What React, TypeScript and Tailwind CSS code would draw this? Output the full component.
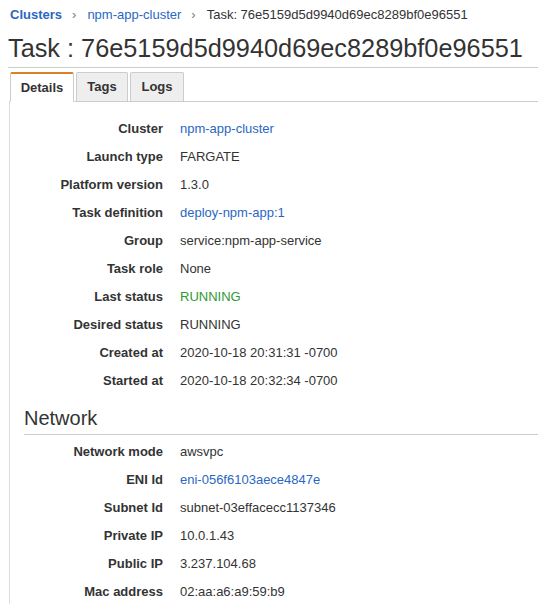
const font = { fontFamily: '"Liberation Sans", Arial, sans-serif' };

type Row = { label: string; value: string; kind?: "link" | "ok" };

const details: Row[] = [
  { label: "Cluster", value: "npm-app-cluster", kind: "link" },
  { label: "Launch type", value: "FARGATE" },
  { label: "Platform version", value: "1.3.0" },
  { label: "Task definition", value: "deploy-npm-app:1", kind: "link" },
  { label: "Group", value: "service:npm-app-service" },
  { label: "Task role", value: "None" },
  { label: "Last status", value: "RUNNING", kind: "ok" },
  { label: "Desired status", value: "RUNNING" },
  { label: "Created at", value: "2020-10-18 20:31:31 -0700" },
  { label: "Started at", value: "2020-10-18 20:32:34 -0700" },
];

const network: Row[] = [
  { label: "Network mode", value: "awsvpc" },
  { label: "ENI Id", value: "eni-056f6103aece4847e", kind: "link" },
  { label: "Subnet Id", value: "subnet-03effacecc1137346" },
  { label: "Private IP", value: "10.0.1.43" },
  { label: "Public IP", value: "3.237.104.68" },
  { label: "Mac address", value: "02:aa:a6:a9:59:b9" },
];

function KeyValue({ row }: { row: Row }) {
  const color =
    row.kind === "link" ? "text-[#2a67c4]" : row.kind === "ok" ? "text-[#2e9a31]" : "text-[#333]";
  return (
    <div className="flex h-[28px] items-center text-[13px]">
      <div className="w-[139px] text-right font-bold text-[#333]">{row.label}</div>
      <div className={`ml-[17px] whitespace-nowrap ${color}`}>{row.value}</div>
    </div>
  );
}

export default function App() {
  return (
    <div className="h-[604px] w-[538px] overflow-hidden bg-white" style={font}>
      {/* breadcrumb */}
      <div className="flex h-[30px] items-center pl-[10px] text-[13px]">
        <span className="font-bold text-[#2a67c4]">Clusters</span>
        <span className="ml-[10px] mr-[11px] text-[#777]">›</span>
        <span className="text-[#2a67c4]">npm-app-cluster</span>
        <span className="ml-[10px] mr-[11px] text-[#777]">›</span>
        <span className="text-[#333]">Task: 76e5159d5d9940d69ec8289bf0e96551</span>
      </div>

      <div className="ml-[8px] border-b border-[#ccc]">
        <h1 className="h-[37px] text-[25.3px] leading-[36px] text-[#333]">
          Task : 76e5159d5d9940d69ec8289bf0e96551
        </h1>
      </div>

      {/* tabs */}
      <div className="ml-[9px] mt-[4px] flex items-end gap-[2px] border-b border-[#ccc] pl-[1px]">
        <div className="-mb-px flex h-[30px] w-[64px] items-center justify-center rounded-t-[2px] border border-b-white border-t-2 border-[#ccc] border-t-[#d8832b] bg-white text-[13px] font-bold text-[#333]">
          Details
        </div>
        <div className="flex h-[29px] w-[52px] items-center justify-center rounded-t-[2px] border border-b-0 border-[#ccc] bg-[#eee] text-[13px] font-bold text-[#333]">
          Tags
        </div>
        <div className="flex h-[29px] w-[54px] items-center justify-center rounded-t-[2px] border border-b-0 border-[#ccc] bg-[#eee] text-[13px] font-bold text-[#333]">
          Logs
        </div>
      </div>

      {/* panel */}
      <div className="ml-[9px] h-[600px] border-l border-[#ddd] pl-[14px] pt-[13px]">
        {details.map((r) => (
          <KeyValue key={r.label} row={r} />
        ))}

        <div className="mt-[10px] border-b border-[#ccc] pb-[3px]">
          <h2 className="text-[20px] leading-[26px] text-[#333]">Network</h2>
        </div>
        <div className="pt-[3px]">
          {network.map((r) => (
            <KeyValue key={r.label} row={r} />
          ))}
        </div>
      </div>
    </div>
  );
}
